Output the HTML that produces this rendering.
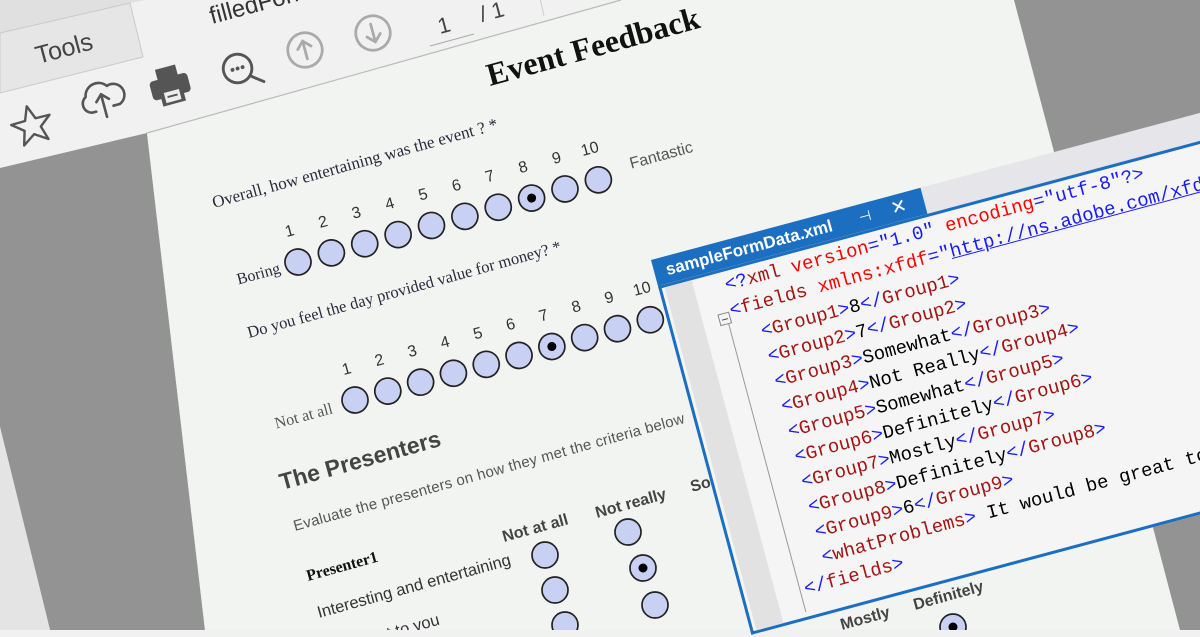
<!DOCTYPE html>
<html><head><meta charset="utf-8"><style>
html,body{margin:0;padding:0;width:1200px;height:630px;overflow:hidden;background:#f1f1f1}
svg{position:absolute;left:0;top:0}
.xml{position:absolute;left:651px;top:260px;width:760px;height:390px;transform-origin:0 0;transform:rotate(-15deg);font-family:"Liberation Mono",monospace;}
.tab{position:absolute;left:0;top:0;width:279px;height:27px;background:#1c6ec0;color:#fff;font:bold 17px "Liberation Sans",sans-serif;line-height:27px;padding-left:12px;box-sizing:border-box;white-space:nowrap}
.band{position:absolute;left:279px;top:0;width:481px;height:27px;background:#e5e5ea}
.body{position:absolute;left:0;top:27px;width:760px;height:361px;background:#f4f5f4;border-top:3px solid #1c6ec0;border-left:3px solid #1c6ec0;border-bottom:3px solid #1c6ec0;box-sizing:border-box}
.strip{position:absolute;left:3px;top:0;width:28px;height:100%;background:#e2e2e2}
.gut{position:absolute;left:55px;top:50px;width:1px;height:300px;background:#999}
.minus{position:absolute;left:47px;top:40px;width:12px;height:12px;border:1px solid #888;background:#f4f5f4;box-sizing:border-box}
.minus:after{content:"";position:absolute;left:2px;top:5px;width:6px;height:1px;background:#444}
.ln{position:absolute;font-size:19px;white-space:pre;color:#000;line-height:20px}
.b{color:#1a1aff}.m{color:#a31515}.r{color:#ff0000}.u{color:#1a1aff;text-decoration:underline}
</style></head><body>
<svg width="1200" height="630" viewBox="0 0 1200 630" font-family="Liberation Sans, sans-serif">
<rect width="1200" height="630" fill="#f1f1f1"/>
<polygon points="0,0 145,0 130,3 0,33" fill="#e0e0e0"/>
<polygon points="0,33 130,3 143,57 0,93" fill="#e6e6e6" stroke="#c9c9c9" stroke-width="1"/>
<polygon points="0,168 147,133 205,630 50,630 0,427" fill="#939393"/>
<polygon points="0,427 50,630 0,630" fill="#e4e4e4"/>
<polygon points="147,133 621,0 1014,0 1180,630 205,630" fill="#f2f4f2"/>
<line x1="147" y1="133" x2="621" y2="0" stroke="#b9b9b9" stroke-width="1.2"/>
<polygon points="1014,0 1200,0 1200,630 1180,630" fill="#939393"/>

<text transform="translate(38,64) rotate(-15)" font-size="25" fill="#444">Tools</text>
<text transform="translate(212,24) rotate(-15)" font-size="24" fill="#333">filledForm.pdf</text>
<text transform="translate(440,34) rotate(-15)" font-size="22" fill="#444">1</text>
<line x1="430" y1="46" x2="474" y2="34" stroke="#aaa" stroke-width="1"/>
<text transform="translate(482,22) rotate(-15)" font-size="22" fill="#444">/  1</text>
<line x1="540" y1="-2" x2="544" y2="16" stroke="#ccc" stroke-width="1"/>

<g transform="translate(32,126) rotate(-15) scale(1.2)" fill="none" stroke="#555" stroke-width="2" stroke-linejoin="round">
<polygon points="0,-17 4.5,-5.5 16.5,-5.3 7,2.3 10.5,14 0,7 -10.5,14 -7,2.3 -16.5,-5.3 -4.5,-5.5"/>
</g>
<g transform="translate(102,98) rotate(-15) scale(1.3)" fill="none" stroke="#555" stroke-width="2" stroke-linecap="round" stroke-linejoin="round">
<path d="M-7,9 H-10 A7,7 0 0 1 -12,-4 A10,10 0 0 1 6,-8 A7,7 0 0 1 12,8 H7"/>
<path d="M0,15 V-3 M-5,2 L0,-3 L5,2"/>
</g>
<g transform="translate(170,86) rotate(-15) scale(1.3)" fill="#555">
<rect x="-8" y="-15" width="16" height="9"/>
<rect x="-15" y="-7" width="30" height="15" rx="3"/>
<rect x="-9" y="2" width="18" height="12" fill="#555"/>
<rect x="-6" y="4" width="12" height="8" fill="#eee"/>
<rect x="-4" y="7" width="8" height="1.5" fill="#555"/>
</g>
<g transform="translate(242,70) rotate(-15) scale(1.3)" fill="none" stroke="#555" stroke-width="2.2" stroke-linecap="round">
<circle cx="-3" cy="-2" r="11"/>
<line x1="5" y1="6" x2="14" y2="13"/>
<circle cx="-7" cy="-2" r="1" fill="#555" stroke-width="1"/><circle cx="-3" cy="-2" r="1" fill="#555" stroke-width="1"/><circle cx="1" cy="-2" r="1" fill="#555" stroke-width="1"/>
</g>
<g transform="translate(305,50) rotate(-15) scale(1.15)" fill="none" stroke="#aaa" stroke-width="2.4" stroke-linecap="round">
<circle r="15"/><path d="M0,8 V-8 M-6,-2 L0,-8 L6,-2"/>
</g>
<g transform="translate(373,33) rotate(-15) scale(1.15)" fill="none" stroke="#aaa" stroke-width="2.4" stroke-linecap="round">
<circle r="15"/><path d="M0,-8 V8 M-6,2 L0,8 L6,2"/>
</g>

<text transform="translate(490,86) rotate(-15.5)" font-family="Liberation Serif, serif" font-weight="bold" font-size="32" fill="#111">Event Feedback</text>
<text transform="translate(214,208) rotate(-15.5)" font-family="Liberation Serif, serif" font-size="17" fill="#2a2a3c">Overall, how entertaining was the event ? *</text>
<g transform="translate(298,262) rotate(-15.3)" font-size="16" fill="#333" text-anchor="middle">
<text x="0" y="-27">1</text><text x="34.6" y="-27">2</text><text x="69.2" y="-27">3</text><text x="103.8" y="-27">4</text><text x="138.4" y="-27">5</text><text x="173" y="-27">6</text><text x="207.6" y="-27">7</text><text x="242.2" y="-27">8</text><text x="276.8" y="-27">9</text><text x="311.4" y="-27">10</text>
<g fill="#c8d0f4" stroke="#222" stroke-width="1.7">
<circle cx="0" r="13"/><circle cx="34.6" r="13"/><circle cx="69.2" r="13"/><circle cx="103.8" r="13"/><circle cx="138.4" r="13"/><circle cx="173" r="13"/><circle cx="207.6" r="13"/><circle cx="242.2" r="13"/><circle cx="276.8" r="13"/><circle cx="311.4" r="13"/>
</g>
<circle cx="242.2" r="4.5" fill="#000"/>
<text x="-19" y="6" text-anchor="end" font-family="Liberation Serif, serif" font-size="16" fill="#2a2a3c">Boring</text>
<text x="346" y="-2" text-anchor="start" font-size="16" fill="#555">Fantastic</text>
</g>
<text transform="translate(249,338) rotate(-15.5)" font-family="Liberation Serif, serif" font-size="16.5" fill="#2a2a3c">Do you feel the day provided value for money? *</text>
<g transform="translate(355,400) rotate(-15.2)" font-size="16" fill="#333" text-anchor="middle">
<text x="0" y="-27">1</text><text x="34" y="-27">2</text><text x="68" y="-27">3</text><text x="102" y="-27">4</text><text x="136" y="-27">5</text><text x="170" y="-27">6</text><text x="204" y="-27">7</text><text x="238" y="-27">8</text><text x="272" y="-27">9</text><text x="306" y="-27">10</text>
<g fill="#c8d0f4" stroke="#222" stroke-width="1.7">
<circle cx="0" r="13"/><circle cx="34" r="13"/><circle cx="68" r="13"/><circle cx="102" r="13"/><circle cx="136" r="13"/><circle cx="170" r="13"/><circle cx="204" r="13"/><circle cx="238" r="13"/><circle cx="272" r="13"/><circle cx="306" r="13"/>
</g>
<circle cx="204" r="4.5" fill="#000"/>
<text x="-24" y="7" text-anchor="end" font-family="Liberation Serif, serif" font-size="16" fill="#555">Not at all</text>
</g>
<text transform="translate(282,490) rotate(-15.5)" font-weight="bold" font-size="23" fill="#444">The Presenters</text>
<text transform="translate(295,531) rotate(-15.5)" font-size="15" fill="#555" textLength="405">Evaluate the presenters on how they met the criteria below</text>
<text transform="translate(504,542) rotate(-15.5)" font-weight="bold" font-size="16" fill="#444">Not at all</text>
<text transform="translate(597,518) rotate(-15.5)" font-weight="bold" font-size="16" fill="#444">Not really</text>
<text transform="translate(692,492) rotate(-15.5)" font-weight="bold" font-size="16" fill="#444">Somewhat</text>
<text transform="translate(308,581) rotate(-15.5)" font-family="Liberation Serif, serif" font-weight="bold" font-size="16" fill="#111">Presenter1</text>
<text transform="translate(319,618) rotate(-15.5)" font-size="16.5" fill="#333">Interesting and entertaining</text>
<text transform="translate(330,655) rotate(-15.5)" font-size="16.5" fill="#333">Relevant to you</text>
<g fill="#c8d0f4" stroke="#222" stroke-width="1.7">
<circle cx="545" cy="555" r="13"/><circle cx="628" cy="532" r="13"/>
<circle cx="555" cy="590" r="13"/><circle cx="643" cy="568" r="13"/>
<circle cx="565" cy="625" r="13"/><circle cx="655" cy="605" r="13"/>
<circle cx="953" cy="627" r="13"/>
</g>
<circle cx="643" cy="568" r="4.5" fill="#000"/>
<circle cx="953" cy="627" r="4.5" fill="#000"/>
<text transform="translate(842,630) rotate(-15.5)" font-weight="bold" font-size="16" fill="#444">Mostly</text>
<text transform="translate(915,610) rotate(-15.5)" font-weight="bold" font-size="16" fill="#444">Definitely</text>
</svg>

<div class="xml">
<div class="band"></div>
<div class="tab">sampleFormData.xml<span style="position:absolute;left:212px;top:0;font-size:14px;font-weight:normal">⊣</span><span style="position:absolute;left:245px;top:0;font-size:19px;font-weight:normal">✕</span></div>
<div class="body">
<div class="strip"></div>
<div class="gut"></div>
<div class="minus"></div>
<div class="ln" style="left:62px;top:4px"><span class="b">&lt;?</span><span class="m">xml</span> <span class="r">version</span><span class="b">="1.0"</span> <span class="r">encoding</span><span class="b">="utf-8"?&gt;</span></div>
<div class="ln" style="left:60px;top:30px"><span class="b">&lt;</span><span class="m">fields</span> <span class="r">xmlns:xfdf</span><span class="b">="</span><span class="u">http://ns.adobe.com/xfdf/</span><span class="b">"&gt;</span></div>
<div class="ln" style="left:85px;top:58px"><span class="b">&lt;</span><span class="m">Group1</span><span class="b">&gt;</span>8<span class="b">&lt;/</span><span class="m">Group1</span><span class="b">&gt;</span></div>
<div class="ln" style="left:85px;top:84px"><span class="b">&lt;</span><span class="m">Group2</span><span class="b">&gt;</span>7<span class="b">&lt;/</span><span class="m">Group2</span><span class="b">&gt;</span></div>
<div class="ln" style="left:85px;top:110px"><span class="b">&lt;</span><span class="m">Group3</span><span class="b">&gt;</span>Somewhat<span class="b">&lt;/</span><span class="m">Group3</span><span class="b">&gt;</span></div>
<div class="ln" style="left:85px;top:136px"><span class="b">&lt;</span><span class="m">Group4</span><span class="b">&gt;</span>Not Really<span class="b">&lt;/</span><span class="m">Group4</span><span class="b">&gt;</span></div>
<div class="ln" style="left:85px;top:162px"><span class="b">&lt;</span><span class="m">Group5</span><span class="b">&gt;</span>Somewhat<span class="b">&lt;/</span><span class="m">Group5</span><span class="b">&gt;</span></div>
<div class="ln" style="left:85px;top:188px"><span class="b">&lt;</span><span class="m">Group6</span><span class="b">&gt;</span>Definitely<span class="b">&lt;/</span><span class="m">Group6</span><span class="b">&gt;</span></div>
<div class="ln" style="left:85px;top:214px"><span class="b">&lt;</span><span class="m">Group7</span><span class="b">&gt;</span>Mostly<span class="b">&lt;/</span><span class="m">Group7</span><span class="b">&gt;</span></div>
<div class="ln" style="left:85px;top:240px"><span class="b">&lt;</span><span class="m">Group8</span><span class="b">&gt;</span>Definitely<span class="b">&lt;/</span><span class="m">Group8</span><span class="b">&gt;</span></div>
<div class="ln" style="left:85px;top:266px"><span class="b">&lt;</span><span class="m">Group9</span><span class="b">&gt;</span>6<span class="b">&lt;/</span><span class="m">Group9</span><span class="b">&gt;</span></div>
<div class="ln" style="left:85px;top:292px"><span class="b">&lt;</span><span class="m">whatProblems</span><span class="b">&gt;</span> It would be great to have more time</div>
<div class="ln" style="left:60px;top:318px"><span class="b">&lt;/</span><span class="m">fields</span><span class="b">&gt;</span></div>
</div>
</div>
</body></html>
